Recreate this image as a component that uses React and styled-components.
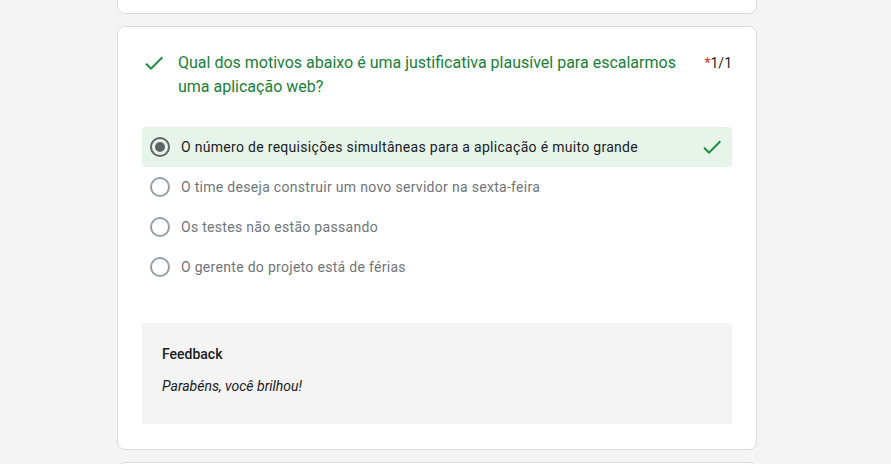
import React from "react";
import styled, { createGlobalStyle } from "styled-components";

const Global = createGlobalStyle`
  html, body {
    margin: 0;
    padding: 0;
    background: #f4f4f4;
    font-family: Roboto, "Liberation Sans", Arial, sans-serif;
    overflow: hidden;
  }
  body {
    padding-right: 17px;
  }
`

const Page = styled.div`
  width: 640px;
  margin: 0 auto;
  display: flex;
  flex-direction: column;
  gap: 12px;
  margin-top: -40px;
`

const Card = styled.div`
  background: #fff;
  border: 1px solid #dadce0;
  border-radius: 8px;
  box-sizing: border-box;
  padding: 24px 24px 25px;
  height: ${p => p.h ? p.h + 'px' : 'auto'};
`

const Head = styled.div`
  display: flex;
  align-items: flex-start;
`

const HeadIcon = styled.div`
  width: 24px;
  height: 24px;
  margin-right: 12px;
  flex-shrink: 0;
`

const Question = styled.div`
  flex: 1;
  font-size: 16px;
  line-height: 24px;
  color: #188038;
`

const Points = styled.div`
  margin-left: 20px;
  font-size: 14px;
  line-height: 24px;
  color: #202124;
  white-space: nowrap;
`

const Star = styled.span`
  color: #d93025;
`

const Options = styled.div`
  margin-top: 28px;
  display: flex;
  flex-direction: column;
`

const Option = styled.div`
  display: flex;
  align-items: center;
  height: 40px;
  padding: 0 8px 0 8px;
  border-radius: 4px;
  background: ${p => p.selected ? '#e6f4ea' : 'transparent'};
`

const Radio = styled.div`
  width: 20px;
  height: 20px;
  box-sizing: border-box;
  border-radius: 50%;
  border: 2px solid ${p => p.selected ? '#5f6368' : '#9aa0a6'};
  display: flex;
  align-items: center;
  justify-content: center;
  margin-right: 11px;
  &::after {
    content: '';
    display: ${p => p.selected ? 'block' : 'none'};
    width: 10px;
    height: 10px;
    border-radius: 50%;
    background: #5f6368;
  }
`

const OptionText = styled.div`
  flex: 1;
  font-size: 14px;
  letter-spacing: 0.3px;
  color: ${p => p.selected ? '#202124' : '#70757a'};
`

const Feedback = styled.div`
  margin-top: 36px;
  background: #f4f4f4;
  padding: 21px 20px 24px;
  height: 101px;
  box-sizing: border-box;
`

const FeedbackTitle = styled.div`
  font-size: 14px;
  font-weight: 500;
  line-height: 20px;
  color: #202124;
`

const FeedbackText = styled.div`
  margin-top: 12px;
  font-size: 14px;
  line-height: 20px;
  font-style: italic;
  color: #202124;
`

const Check = ({ size = 24 }) => (
  <svg width={size} height={size} viewBox="0 0 24 24">
    <path d="M9 16.2 4.8 12l-1.4 1.4L9 19 21 7l-1.4-1.4z" fill="#1e8e3e" />
  </svg>
)

const options = [
  'O número de requisições simultâneas para a aplicação é muito grande',
  'O time deseja construir um novo servidor na sexta-feira',
  'Os testes não estão passando',
  'O gerente do projeto está de férias',
]

export default function App() {
  return (
    <>
      <Global />
      <Page>
        <Card h={54} />
        <Card>
          <Head>
            <HeadIcon><Check /></HeadIcon>
            <Question>
              Qual dos motivos abaixo é uma justificativa plausível para escalarmos uma aplicação web?
            </Question>
            <Points><Star>*</Star>1/1</Points>
          </Head>
          <Options>
            {options.map((o, i) => (
              <Option key={o} selected={i === 0}>
                <Radio selected={i === 0} />
                <OptionText selected={i === 0}>{o}</OptionText>
                {i === 0 && <Check />}
              </Option>
            ))}
          </Options>
          <Feedback>
            <FeedbackTitle>Feedback</FeedbackTitle>
            <FeedbackText>Parabéns, você brilhou!</FeedbackText>
          </Feedback>
        </Card>
        <Card h={60} />
      </Page>
    </>
  )
}
